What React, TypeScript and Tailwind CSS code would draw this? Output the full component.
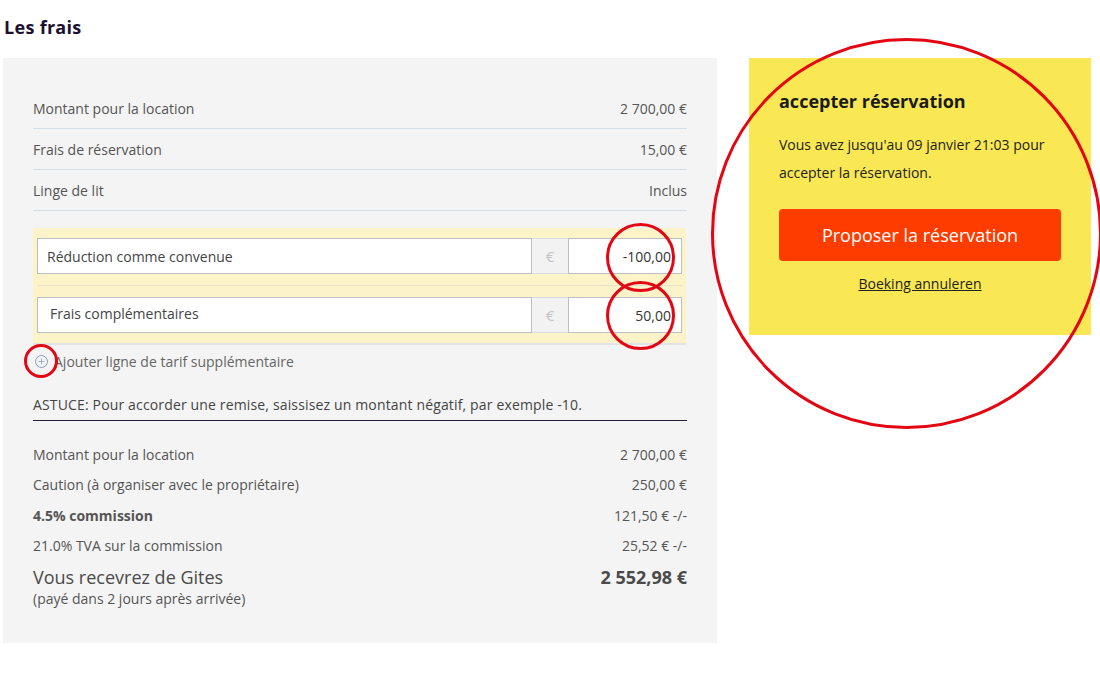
import { Plus } from "lucide-react";

const topRows = [
  { label: "Montant pour la location", value: "2 700,00 €" },
  { label: "Frais de réservation", value: "15,00 €" },
  { label: "Linge de lit", value: "Inclus" },
];

const summary = [
  { label: "Montant pour la location", value: "2 700,00 €", bold: false },
  { label: "Caution (à organiser avec le propriétaire)", value: "250,00 €", bold: false },
  { label: "4.5% commission", value: "121,50 € -/-", bold: true },
  { label: "21.0% TVA sur la commission", value: "25,52 € -/-", bold: false },
];

function ExtraLine({ label, amount, pad }: { label: string; amount: string; pad: string }) {
  return (
    <div className="flex h-[36px]">
      <div className={`flex-1 flex items-center bg-white border border-[#b9c0c6] text-[14px] text-[#444] ${pad}`}>
        {label}
      </div>
      <div className="w-[36px] flex items-center justify-center bg-[#f2f2f2] border-y border-[#d8dde2] text-[15px] text-[#c4c4c4]">
        €
      </div>
      <div className="w-[114px] flex items-center justify-end pr-[10px] bg-white border border-[#b9c0c6] text-[14px] text-[#333]">
        {amount}
      </div>
    </div>
  );
}

function Ring({ className }: { className: string }) {
  return <div className={`absolute rounded-full border-[3px] border-[#e30613] pointer-events-none ${className}`} />;
}

export default function App() {
  return (
    <div className="relative w-[1100px] h-[700px] bg-white font-['Open_Sans',sans-serif] text-[#555]">
      <h1 className="pl-[4px] pt-[16px] text-[18px] font-bold text-[#1b1030] leading-[22px] tracking-[0.3px]">Les frais</h1>

      <div className="flex items-start gap-[32px] pl-[3px] mt-[20px]">
        <div className="w-[714px] h-[585px] bg-[#f4f4f4] px-[30px] pt-[30px]">
          {topRows.map((r) => (
            <div key={r.label} className="flex justify-between items-center h-[41px] border-b border-[#d5dde5] text-[14px]">
              <span>{r.label}</span>
              <span>{r.value}</span>
            </div>
          ))}

          <div className="mt-[17px] bg-[#fdf3c9] border-b-2 border-[#e1e3e4] px-[4px] pt-[10px] pb-[10px] w-[653px]">
            <ExtraLine label="Réduction comme convenue" amount="-100,00" pad="pl-[9px]" />
            <div className="my-[11px] border-t border-[#e7e2c8]" />
            <ExtraLine label="Frais complémentaires" amount="50,00" pad="pl-[12px] pb-[4px]" />
          </div>

          <div className="flex items-center h-[32px] text-[14px] text-[#666]">
            <span className="ml-[2px] mr-[6px] w-[13px] h-[13px] rounded-full border border-[#8a9fb8] flex items-center justify-center">
              <Plus size={9} strokeWidth={2} className="text-[#8a9fb8]" />
            </span>
            Ajouter ligne de tarif supplémentaire
          </div>

          <div className="mt-[17px] pb-[5px] border-b border-[#2a1a3a] text-[14px] text-[#444] tracking-[0.15px]">
            ASTUCE: Pour accorder une remise, saissisez un montant négatif, par exemple -10.
          </div>

          <div className="mt-[18px]">
            {summary.map((r) => (
              <div key={r.label} className={`flex justify-between items-center h-[30.5px] text-[14px] ${r.bold ? "font-bold" : ""}`}>
                <span>{r.label}</span>
                <span className="font-normal">{r.value}</span>
              </div>
            ))}
            <div className="flex justify-between items-center mt-[4px] text-[18px] leading-[24px] text-[#4a4a4a]">
              <span>Vous recevrez de Gites</span>
              <span className="font-bold">2 552,98 €</span>
            </div>
            <div className="mt-[1px] text-[14px] leading-[18px] text-[#555]">(payé dans 2 jours après arrivée)</div>
          </div>
        </div>

        <div className="w-[342px] h-[277px] bg-[#f9e853] px-[30px] pt-[31px]">
          <h2 className="text-[18px] font-bold text-[#1b1a1a] leading-[24px]">accepter réservation</h2>
          <p className="mt-[18px] text-[14px] leading-[28px] text-[#222]">
            Vous avez jusqu'au 09 janvier 21:03 pour accepter la réservation.
          </p>
          <button className="mt-[22px] w-[282px] h-[52px] rounded-[4px] bg-[#ff3c00] text-white text-[18px]">
            Proposer la réservation
          </button>
          <div className="mt-[10px] text-center">
            <a className="text-[14px] text-[#222] underline">Boeking annuleren</a>
          </div>
        </div>
      </div>

      <Ring className="left-[711px] top-[38px] w-[391px] h-[391px]" />
      <Ring className="left-[606px] top-[223px] w-[69px] h-[69px]" />
      <Ring className="left-[606px] top-[281px] w-[69px] h-[69px]" />
      <Ring className="left-[24px] top-[344px] w-[34px] h-[34px]" />
    </div>
  );
}
